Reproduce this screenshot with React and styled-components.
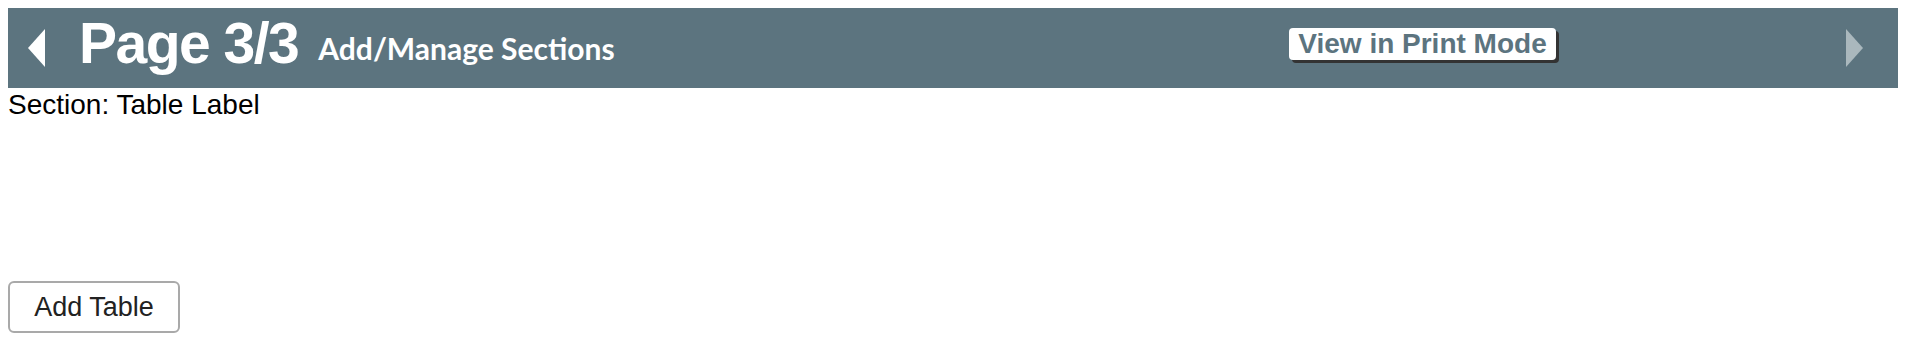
import React from "react"
import styled, { createGlobalStyle } from "styled-components"

const GlobalStyle = createGlobalStyle`
  body {
    margin: 8px;
    background: #ffffff;
    font-family: "Liberation Sans", Arial, sans-serif;
  }
`

const Header = styled.header`
  height: 80px;
  background: #5c747f;
  display: grid;
  grid-template-columns: 1fr 1fr;
  align-items: center;
`

const TitleGroup = styled.div`
  display: flex;
  align-items: center;
  height: 80px;
  padding-left: 20px;
`

const Titles = styled.div`
  display: flex;
  align-items: flex-start;
  align-self: flex-start;
  gap: 20px;
  margin-left: 34px;
`

const PageTitle = styled.h1`
  margin: 7px 0 0;
  color: #ffffff;
  font-family: "Liberation Sans", Arial, sans-serif;
  font-weight: bold;
  font-size: 57px;
  line-height: 57px;
  letter-spacing: -1.5px;
`

const SubTitle = styled.span`
  margin-top: 25px;
  color: #ffffff;
  font-family: Lato, "Open Sans", sans-serif;
  font-weight: 700;
  font-size: 30px;
  line-height: 30px;
`

const RightCell = styled.div`
  display: grid;
  grid-template-columns: 1fr auto 1fr;
  align-items: center;
`

const PrintButton = styled.button`
  grid-column: 2;
  margin: 0 6px 8px 0;
  background: #ffffff;
  color: #5c747f;
  border: none;
  border-radius: 4px;
  box-shadow: 3px 3px 0 #333333;
  font-family: "Liberation Sans", Arial, sans-serif;
  font-weight: bold;
  font-size: 28px;
  line-height: 32px;
  padding: 0 9px;
  cursor: pointer;
`

const ArrowButton = styled.button`
  background: none;
  border: none;
  padding: 0;
  display: flex;
  cursor: pointer;
  justify-self: ${(p) => (p.$right ? "end" : "start")};
  margin-right: ${(p) => (p.$right ? "35px" : "0")};
`

const SectionLabel = styled.div`
  margin-top: 1px;
  font-size: 28px;
  line-height: 32px;
  color: #000000;
`

const SectionBody = styled.div`
  height: 160px;
`

const AddButton = styled.button`
  width: 172px;
  height: 52px;
  background: #ffffff;
  border: 2px solid #a9a9a9;
  border-radius: 6px;
  font-family: "Liberation Sans", Arial, sans-serif;
  font-size: 27px;
  color: #222222;
  cursor: pointer;
`

const Triangle = ({ dir, color }) => (
  <svg width="17" height="38" viewBox="0 0 17 38">
    {dir === "left" ? (
      <polygon points="17,0 0,19 17,38" fill={color} />
    ) : (
      <polygon points="0,0 17,19 0,38" fill={color} />
    )}
  </svg>
)

const App = () => {
  return (
    <>
      <GlobalStyle />
      <Header>
        <TitleGroup>
          <ArrowButton aria-label="Previous page">
            <Triangle dir="left" color="#ffffff" />
          </ArrowButton>
          <Titles>
            <PageTitle>Page 3/3</PageTitle>
            <SubTitle>Add/Manage Sections</SubTitle>
          </Titles>
        </TitleGroup>
        <RightCell>
          <PrintButton>View in Print Mode</PrintButton>
          <ArrowButton $right aria-label="Next page">
            <Triangle dir="right" color="#aab8bd" />
          </ArrowButton>
        </RightCell>
      </Header>
      <SectionLabel>Section: Table Label</SectionLabel>
      <SectionBody />
      <AddButton>Add Table</AddButton>
    </>
  )
}

export default App
